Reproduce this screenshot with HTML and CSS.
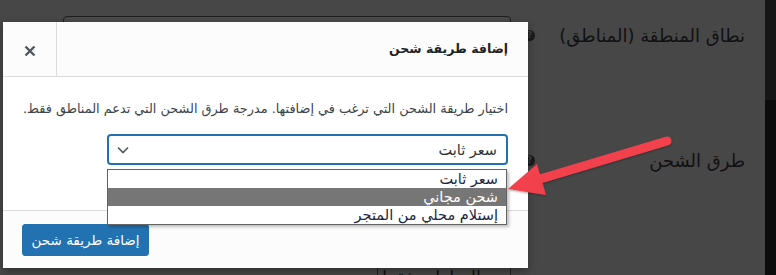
FILE: index.html
```html
<!DOCTYPE html>
<html lang="ar" dir="rtl">
<head>
<meta charset="utf-8">
<title>إضافة طريقة شحن</title>
<link rel="stylesheet" href="styles.css">
</head>
<body>
<div class="page">
  <div class="strip"><div class="strip-top"></div><div class="strip-bottom"></div></div>
  <div class="main">
    <div class="row row-zone">
      <div class="label"><span>نطاق المنطقة (المناطق)</span><span class="help">?</span></div>
      <div class="field"><div class="fake-input"></div></div>
    </div>
    <div class="row row-methods">
      <div class="label"><span>طرق الشحن</span><span class="help">?</span></div>
      <div class="field"></div>
    </div>
    <div class="row row-limit">
      <div class="label"></div>
      <div class="field"><div class="fake-select"><span>المناطق فقط</span></div></div>
    </div>
  </div>
</div>

<div class="modal">
  <div class="modal-header">
    <h1 class="modal-title">إضافة طريقة شحن</h1>
    <button class="modal-close" type="button" aria-label="إغلاق">
      <svg width="12" height="12" viewBox="0 0 12 12"><path d="M1.5 1.5 L10.5 10.5 M10.5 1.5 L1.5 10.5" stroke="#50575e" stroke-width="2.4" stroke-linecap="butt"/></svg>
    </button>
  </div>
  <div class="modal-body">
    <p class="desc">اختيار طريقة الشحن التي ترغب في إضافتها. مدرجة طرق الشحن التي تدعم المناطق فقط.</p>
    <div class="select">
      <span class="select-value">سعر ثابت</span>
      <svg class="chevron" width="12" height="8" viewBox="0 0 12 8"><path d="M1 1.5 L6 6.5 L11 1.5" fill="none" stroke="#50575e" stroke-width="1.6"/></svg>
    </div>
  </div>
  <div class="modal-footer">
    <button class="btn-primary" type="button">إضافة طريقة شحن</button>
  </div>
  <ul class="dropdown">
    <li class="opt">سعر ثابت</li>
    <li class="opt opt-active">شحن مجاني</li>
    <li class="opt">إستلام محلي من المتجر</li>
  </ul>
</div>

<svg class="arrow" width="776" height="275" viewBox="0 0 776 275">
  <defs>
    <filter id="sh" x="-10%" y="-20%" width="120%" height="140%">
      <feDropShadow dx="0" dy="1" stdDeviation="1" flood-color="#000" flood-opacity="0.35"/>
    </filter>
  </defs>
  <g filter="url(#sh)">
    <line x1="667" y1="141" x2="530" y2="182" stroke="#f3414d" stroke-width="9" stroke-linecap="round"/>
    <polygon points="508,189 537,164 546,195" fill="#f3414d"/>
  </g>
</svg>
</body>
</html>
```
FILE: styles.css
```css
* { box-sizing: border-box; }
html, body { margin: 0; padding: 0; }
body {
  width: 776px;
  height: 275px;
  overflow: hidden;
  background: #474747;
  font-family: "DejaVu Sans", "Noto Sans", sans-serif;
  color: #1d2327;
  position: relative;
}

/* dimmed background page */
.page {
  display: flex;
  height: 275px;
  overflow: hidden;
}
.strip {
  width: 11px;
  display: flex;
  flex-direction: column;
}
.strip-top { height: 100px; background: #161616; }
.strip-bottom { flex: 1; background: #0c0c0c; }
.main { flex: 1; }

.row {
  display: grid;
  grid-template-columns: 243px 1fr;
}
.label {
  display: flex;
  justify-content: space-between;
  align-items: center;
  height: 34px;
  padding-right: 20px;
  padding-left: 2px;
  font-size: 18px;
  color: #111;
  white-space: nowrap;
}
.help {
  width: 11px;
  height: 11px;
  border-radius: 50%;
  background: #1b1b1b;
  color: #474747;
  font-size: 8px;
  line-height: 11px;
  text-align: center;
  font-weight: bold;
}
.field { padding-right: 11px; }
.row-zone { padding-top: 16px; }
.row-zone .label { padding-top: 4px; }
.fake-input {
  width: 448px;
  height: 34px;
  border: 1px solid #1e1e1e;
  border-radius: 4px;
  background: #4a4a4a;
}
.row-methods { padding-top: 93px; }
.row-limit { padding-top: 90px; }
.fake-select {
  width: 134px;
  height: 30px;
  border-right: 1px solid #222;
  border-left: 1px solid #222;
  padding-right: 29px;
  white-space: nowrap;
  font-size: 18px;
  line-height: 22px;
  color: #111;
}

/* modal */
.modal {
  position: absolute;
  left: 3px;
  top: 22px;
  width: 525px;
  height: 246px;
  display: flex;
  flex-direction: column;
  background: #fff;
  box-shadow: 0 3px 8px rgba(0, 0, 0, 0.35);
}
.modal-header {
  height: 55px;
  display: flex;
  align-items: stretch;
  justify-content: space-between;
  background: #fcfcfc;
  border-bottom: 1px solid #dcdcde;
}
.modal-title {
  margin: 0;
  align-self: center;
  padding-right: 20px;
  font-size: 12.5px;
  font-weight: bold;
  color: #1d2327;
  line-height: 24px;
}
.modal-close {
  width: 54px;
  border: 0;
  border-right: 1px solid #dcdcde;
  background: transparent;
  padding: 3px 0 0;
  display: flex;
  align-items: center;
  justify-content: center;
  cursor: pointer;
}
.modal-body {
  flex: 1;
  background: #fff;
  padding: 21px 20px 0;
}
.desc {
  margin: 0;
  font-size: 12.85px;
  line-height: 21px;
  color: #3c434a;
  white-space: nowrap;
}
.select {
  margin-top: 15px;
  width: 401px;
  height: 31px;
  border: 2px solid #2271b1;
  border-radius: 4px;
  display: flex;
  align-items: center;
  justify-content: space-between;
  padding: 0 9px 0 8px;
  background: #fff;
}
.select-value {
  font-size: 14.5px;
  color: #2c3338;
}
.chevron { display: block; margin-top: 1px; }

.modal-footer {
  height: 58px;
  background: #fcfcfc;
  border-top: 1px solid #dcdcde;
  display: flex;
  justify-content: flex-end;
  align-items: flex-start;
  padding: 13px 0 0 19px;
}
.btn-primary {
  width: 127px;
  height: 32px;
  background: #2271b1;
  border: 1px solid #2271b1;
  border-radius: 3px;
  color: #fff;
  font-family: inherit;
  font-size: 13.5px;
  padding: 0;
  cursor: pointer;
}

/* native dropdown list */
.dropdown {
  position: absolute;
  left: 104px;
  top: 147px;
  width: 400px;
  margin: 0;
  padding: 0;
  list-style: none;
  border: 1px solid #646464;
  background: #fff;
  box-shadow: 2px 2px 3px rgba(0, 0, 0, 0.25);
}
.opt {
  height: 18px;
  line-height: 18px;
  padding-right: 8px;
  font-size: 14.5px;
  color: #1c2541;
  white-space: nowrap;
}
.opt-active {
  background: #767676;
  color: #fff;
}

.arrow {
  position: absolute;
  left: 0;
  top: 0;
  pointer-events: none;
}
```
